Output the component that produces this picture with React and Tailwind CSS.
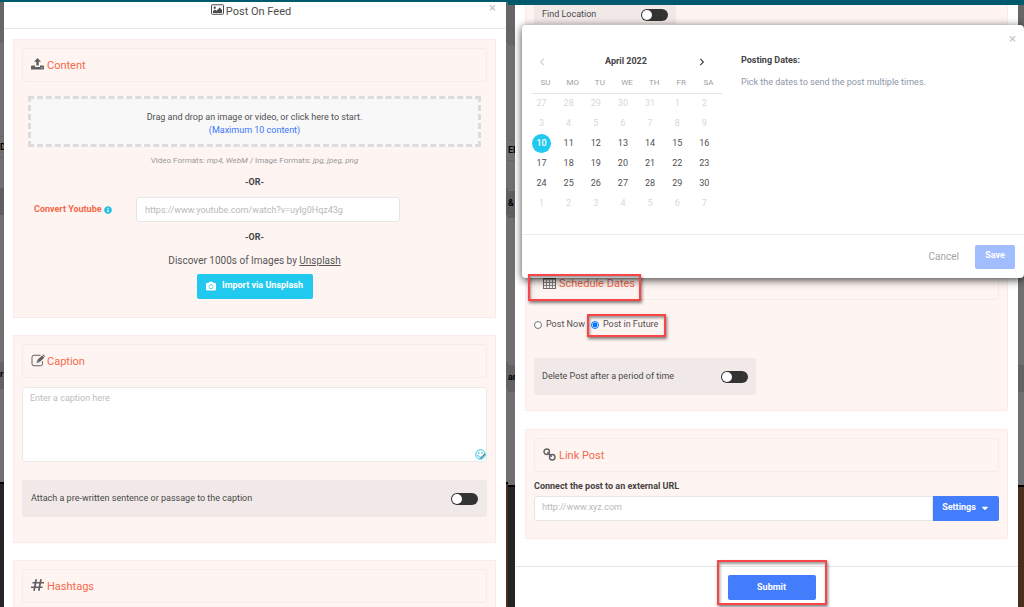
import { useState } from "react";
import { FaCamera, FaCaretDown, FaChevronLeft, FaChevronRight, FaInfoCircle } from "react-icons/fa";

const UploadIcon = () => (
  <svg viewBox="0 0 26 24" className="w-[13px] h-3 fill-current">
    <path d="M13 0l7 7.500h-4.500V15h-5V7.500H6z" />
    <path d="M1.500 15H8v3h10v-3h6.500L26 16.500V23H0v-6.500zM19.500 19v1.500H21V19zM22.500 19v1.500H24V19z" fillRule="evenodd" />
  </svg>
);

const ImageIcon = () => (
  <svg viewBox="0 0 26 22" className="w-[13px] h-[11px]">
    <rect x="1" y="1.500" width="24" height="19" rx="1.500" fill="none" stroke="currentColor" strokeWidth="2" />
    <circle cx="7.500" cy="7.500" r="2.300" fill="currentColor" />
    <path d="M4 18v-4l4-3 3 2.500L17.500 7l4.500 5v6z" fill="currentColor" />
  </svg>
);

const EditIcon = () => (
  <svg viewBox="0 0 28 26" className="w-[14px] h-[13px]">
    <path d="M19 2.500H6a4 4 0 0 0-4 4v13a4 4 0 0 0 4 4h13a4 4 0 0 0 4-4v-5" fill="none" stroke="currentColor" strokeWidth="2" />
    <path d="M11 18l1.500-6L22 3l4.500 4.500L17 16.500z" fill="currentColor" />
    <path d="M23 2l1.500-1.500L28 4.500 26.500 6z" fill="currentColor" />
    <path d="M13.500 13l3 3" stroke="white" strokeWidth="1.200" />
  </svg>
);

const HashIcon = () => (
  <svg viewBox="0 0 26 24" className="w-[13px] h-3" fill="none" stroke="currentColor" strokeWidth="3.400">
    <path d="M10.500 0.500L6 23.500M20 0.500l-4.500 23M3 7.500h23M0 16.500h23" />
  </svg>
);

const CalendarIcon = () => (
  <svg viewBox="0 0 26 26" className="w-[13px] h-[13px]" fill="none" stroke="currentColor">
    <rect x="1" y="2" width="24" height="23" strokeWidth="1.800" />
    <path d="M1 4.500h24" strokeWidth="5" />
    <path d="M7 7v18M13 7v18M19 7v18M1 13h24M1 19h24" strokeWidth="1.400" />
  </svg>
);

const LinkIcon = () => (
  <svg viewBox="0 0 26 26" className="w-[13px] h-[13px]" fill="none" stroke="currentColor" strokeWidth="2.800">
    <circle cx="7.500" cy="7.500" r="5.500" />
    <circle cx="18.500" cy="18.500" r="5.500" />
    <path d="M8.500 8.500l9 9" strokeWidth="3.200" />
  </svg>
);

const EmojiIcon = () => (
  <svg viewBox="0 0 22 22" className="w-[11px] h-[11px]" fill="none" stroke="#25bfdc" strokeWidth="2">
    <circle cx="11" cy="11" r="9.500" />
    <path d="M7.500 6v4M14 6v4M5.500 12c1 4 5 5.500 8 4" />
    <path d="M11 19l9-9" stroke="#3c7f8d" strokeWidth="2.400" />
  </svg>
);

const Section = ({ className = "", children }) => (
  <section className={`border border-[#fbebe8] bg-[#fef5f3] p-2 ${className}`}>{children}</section>
);

const Heading = ({ icon, children }) => (
  <h2 className="flex h-[34px] items-center gap-0.5 rounded-[3px] border border-[#f6ebe9] px-2 pt-0.5 text-[11px] text-[#f4694a]">
    <span className="flex w-[14px] pb-1 text-[#606060]">{icon}</span>
    {children}
  </h2>
);

const Toggle = ({ label }) => (
  <label className="flex flex-1 items-center justify-between text-[9px] text-[#4a4a4a]">
    {label}
    <input type="checkbox" className="peer sr-only" />
    <span className="flex h-3 w-[27px] rounded-full bg-[#333] p-px peer-checked:justify-end peer-focus-visible:ring">
      <span className="size-2.5 rounded-full bg-white" />
    </span>
  </label>
);

const Marker = ({ className }) => (
  <span className={`pointer-events-none absolute z-20 border-2 border-[#f84545] shadow-[1px_2px_3px_rgba(0,0,0,0.5),inset_1px_2px_3px_rgba(0,0,0,0.4)] ${className}`} />
);

// Slice of the dimmed page that stays visible beside a dialog
const Backdrop = ({ className, texts = [], floor = "bg-[#242424]" }) => (
  <div className={`flex shrink-0 flex-col overflow-hidden bg-[#707070] text-[9px] font-bold text-black ${className}`}>
    <div className="h-10 border-b border-[#636363] bg-[#666]" />
    <div className="h-[94px]" />
    <div className="h-[22px] border-y border-[#666] leading-5">{texts[0]}</div>
    <div className="h-[30px]" />
    <div className="h-[27px] bg-[#5f5f5f] leading-6">{texts[1]}</div>
    <div className="h-[147px]" />
    <div className="h-[27px] bg-[#626262] leading-6">{texts[2]}</div>
    <div className="h-[95px] border-b-2 border-black" />
    <div className={`flex-1 ${floor}`} />
  </div>
);

const weekdays = ["SU", "MO", "TU", "WE", "TH", "FR", "SA"];
const weeks = [
  [27, 28, 29, 30, 31, 1, 2],
  [3, 4, 5, 6, 7, 8, 9],
  [10, 11, 12, 13, 14, 15, 16],
  [17, 18, 19, 20, 21, 22, 23],
  [24, 25, 26, 27, 28, 29, 30],
  [1, 2, 3, 4, 5, 6, 7],
];

const dayStyle = (week, day) => {
  if (week < 2 || week > 4) return "text-[#d8d8d8]";
  return day === 10 ? "bg-[#22c9ee] text-white font-medium" : "text-[#505050]";
};

const Calendar = () => (
  <div className="w-[190px] shrink-0">
    <div className="flex h-4 items-center justify-between pr-4 pl-1.5 text-[9px] font-bold text-[#444]">
      <button aria-label="Previous month" className="text-[#d0d0d0]"><FaChevronLeft size={8} /></button>
      <span className="pl-2">April 2022</span>
      <button aria-label="Next month"><FaChevronRight size={8} /></button>
    </div>
    <table className="mt-1 w-full table-fixed border-collapse">
      <thead>
        <tr className="h-[19px] border-b border-[#e4e4e4]">
          {weekdays.map((d) => (
            <th key={d} className="p-0 text-center text-[8px] font-normal text-[#a0a0a0]">{d}</th>
          ))}
        </tr>
      </thead>
      <tbody>
        {weeks.map((days, w) => (
          <tr key={w} className="h-5">
            {days.map((day) => (
              <td key={day} className="p-0">
                <button className={`block size-[19px] rounded-full pt-px text-center text-[9px] ${dayStyle(w, day)}`}>{day}</button>
              </td>
            ))}
          </tr>
        ))}
      </tbody>
    </table>
  </div>
);

const ScheduleDialog = () => (
  <div role="dialog" aria-label="Posting dates" className="absolute top-[25px] right-0 left-[14px] z-10 rounded-[4px] bg-white shadow-[0_2px_8px_rgba(0,0,0,0.75)]">
    <button aria-label="Close" className="absolute top-2 right-2 text-[13px] leading-3 text-[#c4c4c4]">×</button>
    <div className="flex h-[209px] gap-[19px] pt-[29px] pl-2.5">
      <Calendar />
      <div className="text-[9px] leading-3">
        <h3 className="font-bold text-[#444]">Posting Dates:</h3>
        <p className="mt-2.5 text-[#8e96aa]">Pick the dates to send the post multiple times.</p>
      </div>
    </div>
    <div className="flex h-11 items-center justify-end gap-4 border-t border-[#ececec] px-[9px]">
      <button className="text-[10px] text-[#a5a5a5]">Cancel</button>
      <button className="h-6 w-10 rounded-[2px] bg-[#a2bdfd] pb-0.5 text-[9px] font-bold text-white">Save</button>
    </div>
  </div>
);

const FeedForm = () => (
  <div className="flex min-w-0 flex-col">
    <div className="h-0.5 shrink-0 bg-[#00596d]" />
    <div className="flex min-h-0 flex-1">
      <Backdrop className="w-1" texts={["D", "", "r"]} />
      <main className="min-w-0 flex-1 bg-white">
        <header className="relative flex h-[27px] justify-center gap-0.5 border-b border-[#e8e8e8] pr-2 text-[11px] text-[#4c4c4c]">
          <span className="pt-0.5"><ImageIcon /></span>
          <h1 className="leading-[19px]">Post On Feed</h1>
          <button aria-label="Close" className="absolute top-0 right-2.5 text-[13px] leading-3 text-[#c4c4c4]">×</button>
        </header>
        <div className="space-y-[17px] pt-2.5 pr-2.5 pl-[9px]">
          <Section className="h-[279px] text-center">
            <Heading icon={<UploadIcon />}>Content</Heading>
            <button className="mx-1.5 mt-[14px] block h-[51px] w-[calc(100%-12px)] border-[3px] border-dashed border-[#dcdcdc] bg-[#f8f8f8] pt-1 text-[9px] leading-[13px] text-[#505050]">
              Drag and drop an image or video, or click here to start.
              <span className="block text-[#3b76fb]">(Maximum 10 content)</span>
            </button>
            <p className="mt-[7px] text-[8px] leading-[13px] text-[#999]">
              Video Formats: <i>mp4, WebM</i> / Image Formats: <i>jpg, jpeg, png</i>
            </p>
            <p className="mt-[9px] text-[9px] leading-3 font-bold text-[#444]">-OR-</p>
            <div className="mt-[9px] flex items-center pl-3">
              <label htmlFor="youtube" className="flex w-[102px] items-center gap-0.5 text-[9px] font-bold text-[#f4694a]">
                Convert Youtube <FaInfoCircle size={8} className="text-[#22bfe5]" />
              </label>
              <input id="youtube" placeholder="https://www.youtube.com/watch?v=uyIg0Hqz43g" className="h-[25px] w-[264px] rounded-[3px] border border-[#e6e6e6] bg-white px-2 text-[9px] placeholder:text-[#b9b9b9]" />
            </div>
            <p className="mt-[9px] text-[9px] leading-3 font-bold text-[#444]">-OR-</p>
            <p className="mt-2.5 text-[10px] leading-4 text-[#555]">
              Discover 1000s of Images by <a href="#unsplash" className="underline">Unsplash</a>
            </p>
            <button className="mx-auto mt-[5px] flex h-[25px] w-[116px] items-center justify-center gap-1.5 rounded-[2px] bg-[#22c9ee] pb-px text-[9px] font-bold text-white">
              <FaCamera size={10} /> Import via Unsplash
            </button>
          </Section>
          <Section className="h-52">
            <Heading icon={<EditIcon />}>Caption</Heading>
            <div className="relative mt-[9px]">
              <textarea aria-label="Caption" placeholder="Enter a caption here" className="block h-[75px] w-full resize-none rounded-[3px] border border-[#ebe8e8] bg-white px-[7px] py-1 text-[9px] leading-[13px] placeholder:text-[#bdbdbd]" />
              <button aria-label="Insert emoji" className="absolute right-[1px] bottom-[2px]"><EmojiIcon /></button>
            </div>
            <div className="mt-[18px] flex h-[37px] rounded-[2px] bg-[#f1e9e8] px-[9px]">
              <Toggle label="Attach a pre-written sentence or passage to the caption" />
            </div>
          </Section>
          <Section className="h-20">
            <Heading icon={<HashIcon />}>Hashtags</Heading>
          </Section>
        </div>
      </main>
      <Backdrop className="w-0.5" floor="bg-[#4a2e1d]" />
    </div>
  </div>
);

const ScheduleForm = () => {
  const [when, setWhen] = useState("future");

  return (
    <div className="relative flex min-w-0 flex-col">
      <div className="h-[5px] shrink-0 bg-[#00596d]" />
      <div className="flex min-h-0 flex-1">
        <Backdrop className="w-[7px]" texts={["ED", "&", "ar"]} />
        <main className="min-w-0 flex-1 bg-white">
          <div className="space-y-[18px] px-[10px]">
            <Section className="h-[406px] border-t-0 pt-0">
              <div className="flex h-[19px] w-[142px] bg-[#f1e9e8] px-2">
                <Toggle label="Find Location" />
              </div>
              <div className="relative mt-[242px]">
                <Heading icon={<CalendarIcon />}>Schedule Dates</Heading>
                <Marker className="top-2 -left-1.5 h-[27px] w-[113px]" />
              </div>
              <div className="mt-[17px] flex h-4 items-center text-[9px] text-[#505050]">
                <label className="flex items-center gap-1 whitespace-nowrap">
                  <input type="radio" name="when" className="size-2" checked={when === "now"} onChange={() => setWhen("now")} />
                  Post Now
                </label>
                <label className="relative ml-1.5 flex items-center gap-1 whitespace-nowrap">
                  <input type="radio" name="when" className="size-2" checked={when === "future"} onChange={() => setWhen("future")} />
                  Post in Future
                  <Marker className="-top-1 -right-2 -left-1 h-[23px]" />
                </label>
              </div>
              <div className="mt-[25px] flex h-[37px] w-[222px] rounded-[2px] bg-[#f1e9e8] px-2">
                <Toggle label="Delete Post after a period of time" />
              </div>
            </Section>
            <Section className="h-[110px]">
              <Heading icon={<LinkIcon />}>Link Post</Heading>
              <label htmlFor="url" className="mt-1.5 block text-[9px] leading-4 font-bold text-[#444]">Connect the post to an external URL</label>
              <div className="mt-0.5 flex h-[25px]">
                <input id="url" placeholder="http://www.xyz.com" className="min-w-0 flex-1 rounded-l-[3px] border border-[#e6e6e6] bg-white px-[7px] pb-0.5 text-[9px] placeholder:text-[#b9b9b9]" />
                <button className="flex w-[66px] items-center justify-center gap-1 rounded-r-[2px] bg-[#437dfb] pb-0.5 text-[9px] font-bold text-white">
                  Settings <FaCaretDown size={10} />
                </button>
              </div>
            </Section>
          </div>
          <footer className="mt-[27px] flex justify-center border-t border-[#e6e6e6] pt-2 pl-2.5">
            <div className="relative">
              <button className="block h-[25px] w-[88px] rounded-[2px] bg-[#437dfb] text-[9px] font-bold text-white">Submit</button>
              <Marker className="-inset-x-[11px] -top-[15px] h-[45px]" />
            </div>
          </footer>
        </main>
        <Backdrop className="w-1.5" floor="bg-[#4a2e1d]" />
      </div>
      <ScheduleDialog />
    </div>
  );
};

const App = () => (
  <div className="grid h-screen grid-cols-[508fr_516fr] grid-rows-1 overflow-hidden bg-white font-[Roboto,sans-serif]">
    <FeedForm />
    <ScheduleForm />
  </div>
);

export default App;
